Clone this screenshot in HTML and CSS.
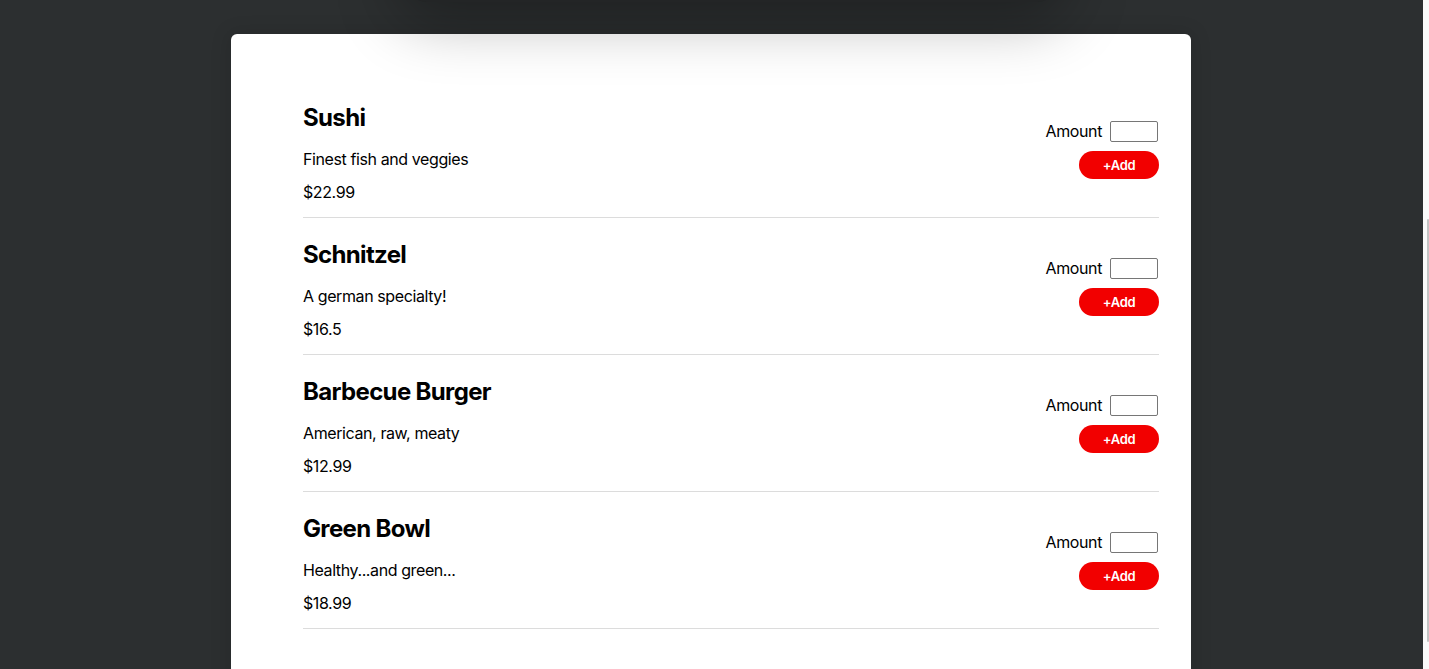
FILE: index.html
```html
<!DOCTYPE html>
<html lang="en">
<head>
<meta charset="utf-8">
<title>Meals</title>
<link rel="stylesheet" href="styles.css">
</head>
<body>
<div class="page">
  <main class="main">
    <div class="summary"></div>
    <section class="card">
      <ul class="meal-list">
        <li class="meal">
          <div class="meal-info">
            <h3 class="meal-name">Sushi</h3>
            <p class="meal-desc">Finest fish and veggies</p>
            <p class="meal-price">$22.99</p>
          </div>
          <form class="meal-form">
            <div class="amount-row">
              <label class="amount-label" for="a1">Amount</label>
              <input class="amount-input" id="a1" type="text">
            </div>
            <button class="add-btn" type="button">+Add</button>
          </form>
        </li>
        <li class="meal">
          <div class="meal-info">
            <h3 class="meal-name">Schnitzel</h3>
            <p class="meal-desc">A german specialty!</p>
            <p class="meal-price">$16.5</p>
          </div>
          <form class="meal-form">
            <div class="amount-row">
              <label class="amount-label" for="a2">Amount</label>
              <input class="amount-input" id="a2" type="text">
            </div>
            <button class="add-btn" type="button">+Add</button>
          </form>
        </li>
        <li class="meal">
          <div class="meal-info">
            <h3 class="meal-name">Barbecue Burger</h3>
            <p class="meal-desc">American, raw, meaty</p>
            <p class="meal-price">$12.99</p>
          </div>
          <form class="meal-form">
            <div class="amount-row">
              <label class="amount-label" for="a3">Amount</label>
              <input class="amount-input" id="a3" type="text">
            </div>
            <button class="add-btn" type="button">+Add</button>
          </form>
        </li>
        <li class="meal">
          <div class="meal-info">
            <h3 class="meal-name">Green Bowl</h3>
            <p class="meal-desc">Healthy...and green...</p>
            <p class="meal-price">$18.99</p>
          </div>
          <form class="meal-form">
            <div class="amount-row">
              <label class="amount-label" for="a4">Amount</label>
              <input class="amount-input" id="a4" type="text">
            </div>
            <button class="add-btn" type="button">+Add</button>
          </form>
        </li>
      </ul>
    </section>
  </main>
  <div class="scrollbar"><div class="thumb"></div></div>
</div>
</body>
</html>
```

FILE: styles.css
```css
* { box-sizing: border-box; }

html, body {
  margin: 0;
  padding: 0;
  height: 100%;
  overflow: hidden;
}

body {
  font-family: Inter, "Noto Sans", "Liberation Sans", sans-serif;
  color: #000;
  background: #2c2f30;
}

.page {
  display: flex;
  height: 100%;
}

.main {
  flex: 1;
  position: relative;
  background: #2c2f30;
  overflow: hidden;
  padding-right: 1px;
}

.summary {
  position: absolute;
  top: -200px;
  left: 50%;
  width: 640px;
  height: 202px;
  margin-left: -300px;
  background: #232526;
  border-radius: 14px;
  box-shadow: 0 4px 64px 12px rgba(0, 0, 0, 0.33);
  z-index: 2;
}

.card {
  position: relative;
  z-index: 1;
  width: 960px;
  margin: 34px auto 0;
  background: #fff;
  border-radius: 6px;
  padding: 47px 32px 60px 72px;
  box-shadow: 0 1px 18px 4px rgba(0, 0, 0, 0.1);
}

.meal-list {
  list-style: none;
  margin: 0;
  padding: 0;
}

.meal {
  display: flex;
  justify-content: space-between;
  align-items: center;
  padding: 22px 0 15px;
  border-bottom: 1px solid #dcdcdc;
}

.meal-info {
  display: flex;
  flex-direction: column;
}

.meal-name {
  margin: 0;
  font-size: 24px;
  line-height: 30px;
  font-weight: 700;
  letter-spacing: -0.65px;
}

.meal-desc {
  margin: 16px 0 0;
  font-size: 16px;
  line-height: 20px;
  letter-spacing: -0.4px;
}

.meal-price {
  margin: 13px 0 0;
  font-size: 16px;
  line-height: 20px;
  letter-spacing: -0.4px;
}

.meal-form {
  display: flex;
  flex-direction: column;
  align-items: flex-end;
  margin-bottom: 6px;
}

.amount-row {
  display: flex;
  align-items: center;
  gap: 8px;
  height: 21px;
  margin-right: 1px;
}

.amount-label {
  font-size: 16px;
  line-height: 21px;
  letter-spacing: -0.4px;
}

.amount-input {
  width: 48px;
  height: 21px;
  margin: 0;
  padding: 0 2px;
  border: 1px solid #767676;
  border-radius: 2px;
  font: inherit;
  font-size: 13px;
}

.add-btn {
  margin-top: 9px;
  width: 80px;
  height: 28px;
  border: none;
  border-radius: 14px;
  background: #f20000;
  color: #fff;
  font-family: Inter, "Noto Sans", "Liberation Sans", sans-serif;
  font-size: 13px;
  font-weight: 600;
  letter-spacing: -0.3px;
  line-height: 28px;
  padding: 0;
  cursor: pointer;
}

.scrollbar {
  width: 6px;
  background: #fafafa;
  display: flex;
  justify-content: flex-end;
  padding-top: 219px;
}

.thumb {
  width: 2px;
  height: 423px;
  background: #c4c4c4;
  border-radius: 1px;
}
```
